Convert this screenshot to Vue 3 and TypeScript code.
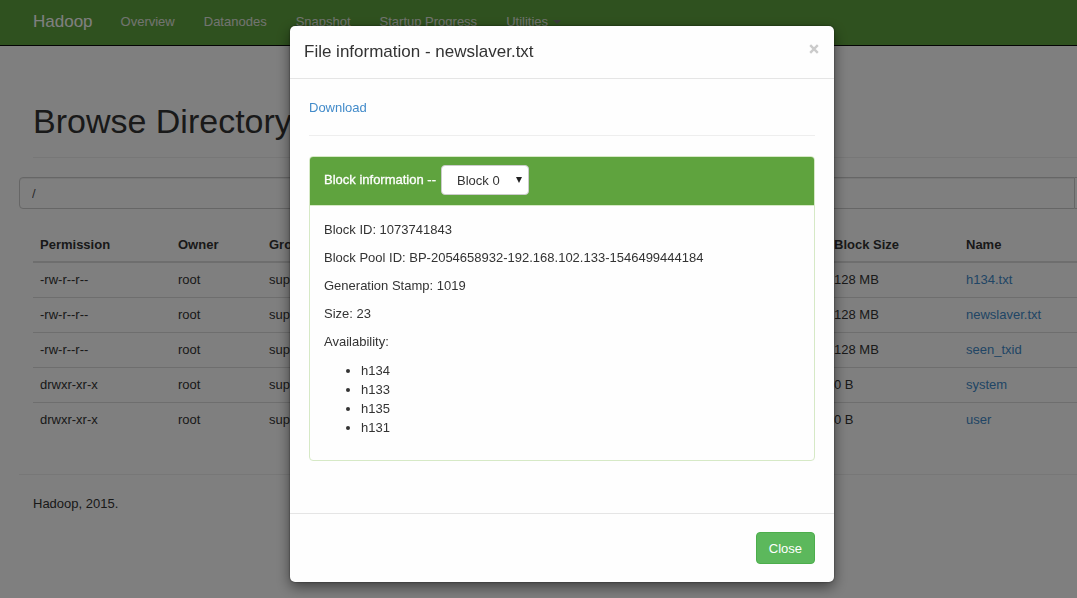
<script setup lang="ts">
import { ref } from 'vue'

interface Entry {
  permission: string
  blockSize: string
  name: string
}

const navLinks: string[] = ['Overview', 'Datanodes', 'Snapshot', 'Startup Progress']

const entries: Entry[] = [
  { permission: '-rw-r--r--', blockSize: '128 MB', name: 'h134.txt' },
  { permission: '-rw-r--r--', blockSize: '128 MB', name: 'newslaver.txt' },
  { permission: '-rw-r--r--', blockSize: '128 MB', name: 'seen_txid' },
  { permission: 'drwxr-xr-x', blockSize: '0 B', name: 'system' },
  { permission: 'drwxr-xr-x', blockSize: '0 B', name: 'user' },
]

const details: string[] = [
  'Block ID: 1073741843',
  'Block Pool ID: BP-2054658932-192.168.102.133-1546499444184',
  'Generation Stamp: 1019',
  'Size: 23',
  'Availability:',
]

const hosts: string[] = ['h134', 'h133', 'h135', 'h131']

const directory = ref('/')
const block = ref('0')
const open = ref(true)
</script>

<template>
  <div class="page">
    <header class="navbar">
      <a class="brand" href="#">Hadoop</a>
      <nav class="links">
        <a v-for="link in navLinks" :key="link" href="#">{{ link }}</a>
        <a href="#">Utilities<span class="caret"></span></a>
      </nav>
    </header>

    <main class="content">
      <h1>Browse Directory</h1>
      <form class="path" @submit.prevent>
        <input v-model="directory" type="text" aria-label="Directory" />
        <button type="submit" aria-label="Go"></button>
      </form>
      <table class="files">
        <colgroup>
          <col class="c-permission" />
          <col class="c-owner" />
          <col class="c-group" />
          <col class="c-block" />
          <col />
        </colgroup>
        <thead>
          <tr>
            <th>Permission</th>
            <th>Owner</th>
            <th>Group</th>
            <th>Block Size</th>
            <th>Name</th>
          </tr>
        </thead>
        <tbody>
          <tr v-for="e in entries" :key="e.name">
            <td>{{ e.permission }}</td>
            <td>root</td>
            <td>supergroup</td>
            <td>{{ e.blockSize }}</td>
            <td><a href="#">{{ e.name }}</a></td>
          </tr>
        </tbody>
      </table>
    </main>
    <footer class="footer">Hadoop, 2015.</footer>

    <div v-if="open" class="backdrop">
      <section class="modal" role="dialog" aria-modal="true" aria-labelledby="modal-title">
        <div class="modal-header">
          <h4 id="modal-title">File information - newslaver.txt</h4>
          <button class="dismiss" type="button" aria-label="Dismiss" @click="open = false">
            <svg width="10" height="10" viewBox="0 0 10 10" aria-hidden="true">
              <path d="M1.2 1.2 8.8 8.8M8.8 1.2 1.2 8.8" fill="none" stroke="#cbcbcb" stroke-width="2.4" />
            </svg>
          </button>
        </div>
        <div class="modal-body">
          <a class="download" href="#">Download</a>
          <div class="panel">
            <div class="panel-heading">
              <label for="block">Block information --</label>
              <div class="picker">
                <select id="block" v-model="block">
                  <option value="0">Block 0</option>
                </select>
                <svg width="6" height="6" viewBox="0 0 6 6" aria-hidden="true">
                  <path d="M0 0H6L3 6Z" fill="#222" />
                </svg>
              </div>
            </div>
            <div class="panel-body">
              <p v-for="line in details" :key="line">{{ line }}</p>
              <ul>
                <li v-for="host in hosts" :key="host">{{ host }}</li>
              </ul>
            </div>
          </div>
        </div>
        <div class="modal-footer">
          <button class="close" type="button" @click="open = false">Close</button>
        </div>
      </section>
    </div>
  </div>
</template>

<style>
body {
  margin: 0;
  background: #fff;
}
</style>

<style scoped>
*,
*::before,
*::after {
  box-sizing: border-box;
}

.page {
  min-height: 100vh;
  overflow: hidden;
  color: #333;
  font-family: "Liberation Sans", Arial, sans-serif;
  font-size: 13px;
  line-height: 19px;
}

a {
  color: #428bca;
  text-decoration: none;
}

.navbar {
  display: flex;
  align-items: center;
  height: 46px;
  padding: 0 19px 2px;
  background: #5fa33e;
  border-bottom: 1px solid #080808;
}

.brand {
  padding: 0 14px;
  color: #fff;
  font-size: 17px;
}

.links {
  display: flex;
  gap: 1px;
}

.links a {
  display: flex;
  align-items: center;
  gap: 5px;
  padding: 0 14px;
  color: #e4e8e0;
}

.caret {
  border: 4px solid transparent;
  border-top-color: #777;
  border-bottom: 0;
}

.content {
  padding-left: 33px;
}

h1 {
  margin: 56px 0 19px;
  padding-bottom: 17px;
  border-bottom: 1px solid #eee;
  font-size: 34px;
  font-weight: 400;
  line-height: 38px;
}

.path {
  display: flex;
  margin-left: -14px;
}

.path input {
  flex: 1;
  min-width: 0;
  height: 32px;
  padding: 0 12px;
  color: #555;
  background: #fff;
  border: 1px solid #ccc;
  border-radius: 4px 0 0 4px;
  box-shadow: inset 0 1px 1px rgba(0, 0, 0, 0.075);
  font: inherit;
}

.path button {
  width: 2px;
  padding: 0;
  background: #fff;
  border: 1px solid #ccc;
  border-width: 1px 0;
}

.files {
  width: 100%;
  margin-top: 18px;
  border-collapse: collapse;
  table-layout: fixed;
}

.c-permission {
  width: 138px;
}

.c-owner {
  width: 91px;
}

.c-group {
  width: 565px;
}

.c-block {
  width: 132px;
}

.files th,
.files td {
  height: 35px;
  padding: 7px;
  text-align: left;
}

.files th {
  border-bottom: 2px solid #ddd;
}

.files tbody tr + tr td {
  border-top: 1px solid #ddd;
}

.footer {
  margin: 37px 0 0 19px;
  padding: 19px 14px;
  border-top: 1px solid #eee;
}

.backdrop {
  position: fixed;
  inset: 0;
  padding: 26px 0 0 47px;
  background: rgba(0, 0, 0, 0.5);
}

.modal {
  width: 100%;
  max-width: 544px;
  margin: 0 auto;
  background: #fefefe;
  border-radius: 5px;
  box-shadow: 0 5px 14px rgba(0, 0, 0, 0.5), 0 0 2px rgba(0, 0, 0, 0.6);
}

.modal-header {
  display: flex;
  justify-content: space-between;
  align-items: flex-start;
  padding: 14px 14px 15px;
  border-bottom: 1px solid #e5e5e5;
}

h4 {
  margin: 0;
  font-size: 17px;
  font-weight: 400;
  line-height: 23px;
}

.dismiss {
  display: flex;
  padding: 4px 1px;
  background: none;
  border: 0;
}

.modal-body {
  padding: 19px;
}

.download {
  display: block;
  margin-bottom: 20px;
  padding-bottom: 18px;
  border-bottom: 1px solid #eee;
}

.panel {
  margin-bottom: 33px;
  border: 1px solid #d6e9c6;
  border-radius: 4px;
  overflow: hidden;
}

.panel-heading {
  display: flex;
  align-items: center;
  gap: 5px;
  padding: 8px 14px 10px;
  color: #fff;
  background: #5fa33e;
  border-bottom: 1px solid #d6e9c6;
}

.panel-heading label {
  padding-bottom: 2px;
  -webkit-text-stroke: 0.3px #fff;
}

.picker {
  display: grid;
  align-items: center;
}

.picker select {
  grid-area: 1 / 1;
  width: 88px;
  height: 30px;
  padding: 0 15px;
  appearance: none;
  color: #333;
  background: #fff;
  border: 1px solid #ccc;
  border-radius: 4px;
  font: inherit;
}

.picker svg {
  grid-area: 1 / 1;
  justify-self: end;
  margin-right: 7px;
  pointer-events: none;
}

.panel-body {
  padding: 14px;
}

.panel-body p {
  margin: 0 0 9px;
}

.panel-body ul {
  margin: 10px 0 9px;
  padding-left: 37px;
}

.modal-footer {
  display: flex;
  justify-content: flex-end;
  padding: 18px 19px;
  border-top: 1px solid #e5e5e5;
}

.close {
  height: 32px;
  padding: 0 12px;
  color: #fff;
  background: #5cb85c;
  border: 1px solid #4cae4c;
  border-radius: 4px;
  font: inherit;
}
</style>
